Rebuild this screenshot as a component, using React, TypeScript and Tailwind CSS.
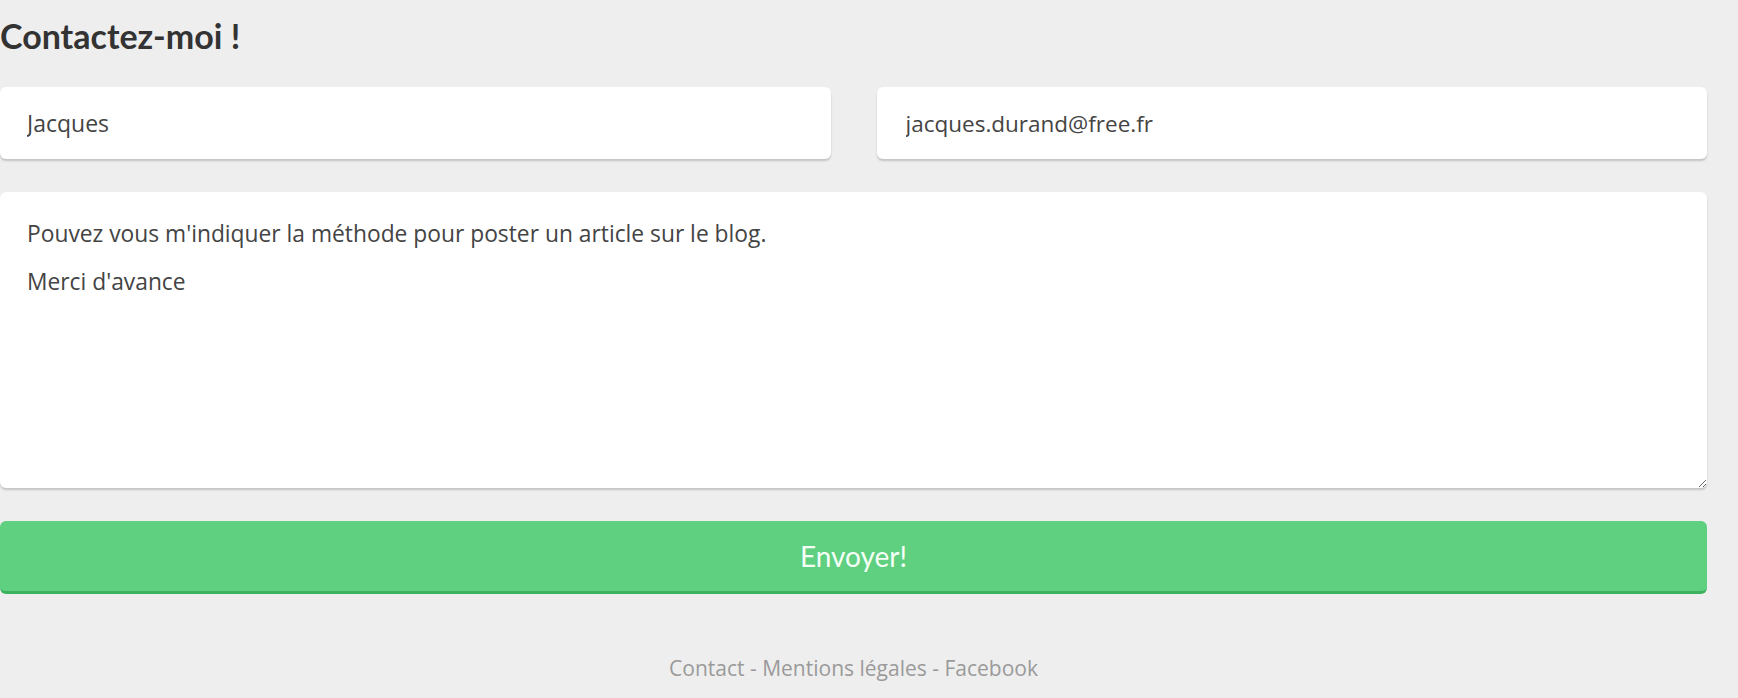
import React from 'react';

const font = { fontFamily: '"Open Sans", Lato, sans-serif' };

export default function App() {
  return (
    <div className="min-h-screen w-full bg-[#eeeeee]" style={font}>
      <div className="w-[1707px]">
        {/* Title */}
        <h2 className="pt-[16px] font-['Lato'] text-[34px] font-bold leading-[40px] text-[#333333]">Contactez-moi !</h2>

        {/* Name + email */}
        <div className="mt-[31px] grid grid-cols-2 gap-[46px]">
          <input
            type="text"
            defaultValue="Jacques"
            className="h-[72px] rounded-md bg-white px-[27px] text-[23px] text-[#444444] shadow-[0_2px_2px_rgba(0,0,0,0.18)] outline-none"
          />
          <input
            type="email"
            defaultValue="jacques.durand@free.fr"
            className="h-[72px] rounded-md bg-white px-[29px] text-[22.5px] text-[#444444] shadow-[0_2px_2px_rgba(0,0,0,0.18)] outline-none"
          />
        </div>

        {/* Message */}
        <textarea
          defaultValue={"Pouvez vous m'indiquer la méthode pour poster un article sur le blog.\n\nMerci d'avance"}
          className="mt-[33px] block h-[296px] w-full rounded-md bg-white px-[27px] pt-[30px] text-[22.8px] leading-[24px] text-[#444444] shadow-[0_2px_2px_rgba(0,0,0,0.18)] outline-none"
        />

        {/* Submit */}
        <button className="mt-[33px] block h-[73px] w-full rounded-md border-b-[3px] border-[#3cb25e] bg-[#5fcf80] font-['Lato'] text-[28px] text-[#f4fff7]">
          Envoyer!
        </button>

        {/* Footer */}
        <footer className="mt-[59px] text-center text-[21px] text-[#9a9a9a]">
          Contact - Mentions légales - Facebook
        </footer>
      </div>
    </div>
  );
}
